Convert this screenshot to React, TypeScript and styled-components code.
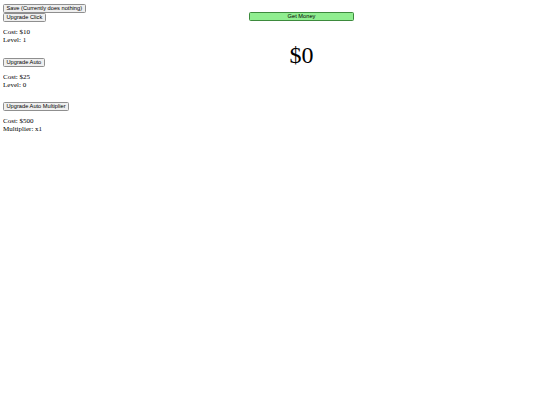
import React, { useState } from "react";
import styled, { createGlobalStyle } from "styled-components";

const GlobalStyle = createGlobalStyle`
  body {
    margin: 4px 3px;
    font-family: "Liberation Serif", "Times New Roman", serif;
    font-size: 7px;
    color: #000;
    background: #fff;
  }
`;

const Page = styled.div`
  display: flex;
  align-items: flex-start;
`;

const Sidebar = styled.div`
  display: flex;
  flex-direction: column;
  align-items: flex-start;
  width: 131px;
`;

const Main = styled.div`
  display: flex;
  flex-direction: column;
  align-items: center;
  width: 335px;
  padding-top: 8px;
`;

const Button = styled.button<{ $green?: boolean }>`
  font-family: "Liberation Sans", Arial, sans-serif;
  font-size: 5.7px;
  line-height: 7px;
  height: 9px;
  padding: 0 2.5px;
  margin: 0;
  border: 1px solid ${(p) => (p.$green ? "#3d8a3d" : "#8f8f8f")};
  border-radius: 1.5px;
  background: ${(p) => (p.$green ? "#90ee90" : "#efefef")};
  color: #000;
  cursor: pointer;
`;

const WideButton = styled(Button)`
  width: 105px;
`;

const Stats = styled.p<{ $gap: number }>`
  margin: 6px 0 ${(p) => p.$gap}px;
  line-height: 8px;
`;

const Money = styled.div`
  font-size: 24px;
  line-height: 30px;
  margin-top: 19px;
`;

export default function App() {
  const [money, setMoney] = useState(0);
  return (
    <>
      <GlobalStyle />
      <Page>
        <Sidebar>
          <Button>Save (Currently does nothing)</Button>
          <Button>Upgrade Click</Button>
          <Stats $gap={14}>
            Cost: $10
            <br />
            Level: 1
          </Stats>
          <Button>Upgrade Auto</Button>
          <Stats $gap={13}>
            Cost: $25
            <br />
            Level: 0
          </Stats>
          <Button>Upgrade Auto Multiplier</Button>
          <Stats $gap={0}>
            Cost: $500
            <br />
            Multiplier: x1
          </Stats>
        </Sidebar>
        <Main>
          <WideButton $green onClick={() => setMoney(money + 1)}>
            Get Money
          </WideButton>
          <Money>${money}</Money>
        </Main>
      </Page>
    </>
  );
}
